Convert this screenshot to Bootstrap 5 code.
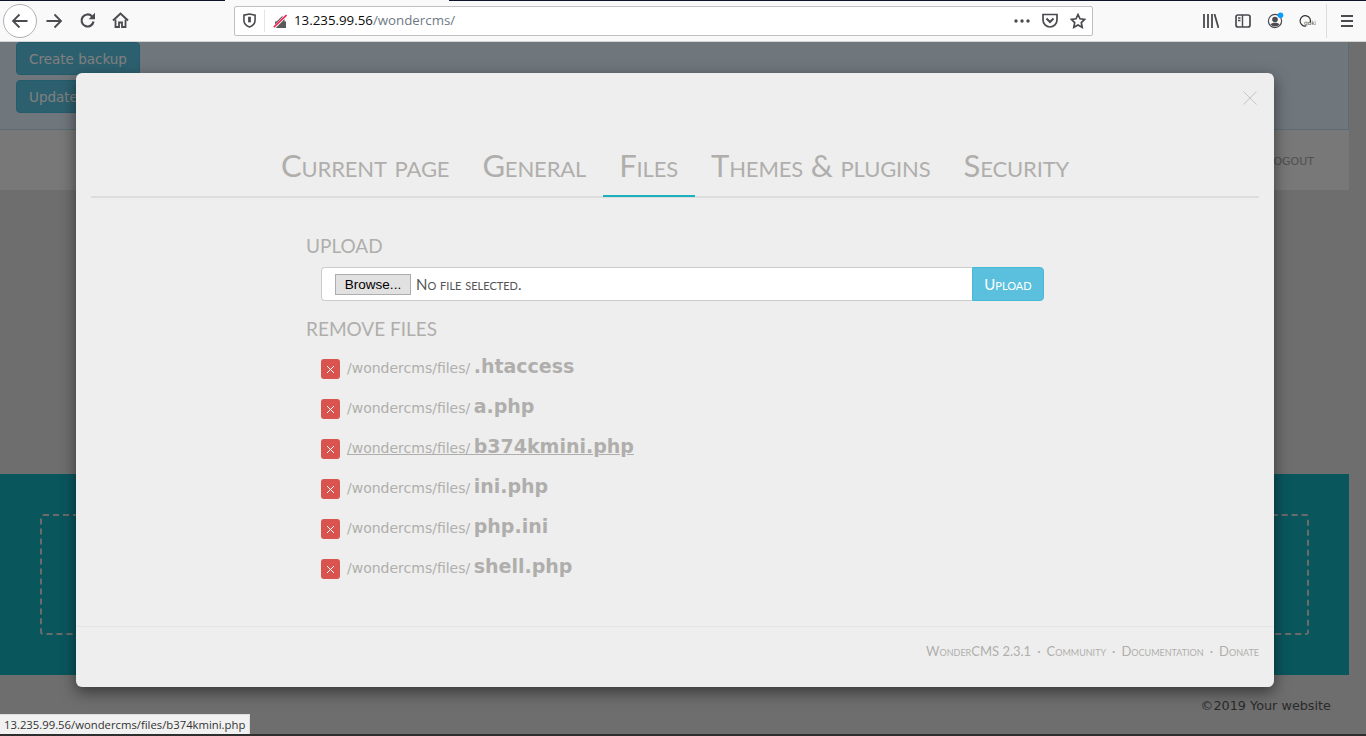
<!DOCTYPE html>
<html lang="en">
  <head>
    <meta charset="UTF-8" />
    <meta name="viewport" content="width=device-width, initial-scale=1" />
    <title>WonderCMS - Files</title>
    <link
      href="https://cdn.jsdelivr.net/npm/bootstrap@5.3.0/dist/css/bootstrap.min.css"
      rel="stylesheet"
    />
    <style>
      html,
      body {
        height: 736px;
        overflow: hidden;
      }
      body {
        background: #ddd;
        font-family: "DejaVu Sans", sans-serif;
        color: #222;
      }
      /* browser chrome */
      .browser-bar {
        height: 42px;
        background: #f9f9fa;
        border-bottom: 1px solid #d4d4d4;
        padding-left: 3px;
        color: #4a4a4f;
        position: relative;
      }
      .browser-bar svg {
        display: block;
        flex: none;
      }
      .back-circle {
        width: 34px;
        height: 34px;
        border: 1px solid #b1b1b3;
        border-radius: 50%;
        background: #fff;
      }
      .url-box {
        margin-left: 105px;
        width: 859px;
        height: 30px;
        background: #fff;
        border: 1px solid #c0c0c2;
        border-radius: 2px;
        font-family: "Open Sans", sans-serif;
        font-size: 13.3px;
        color: #0c0c0d;
      }
      .url-path {
        color: #6f7a86;
      }
      .url-sep {
        width: 1px;
        height: 22px;
        margin: 0 8px;
        background: #e4e4e6;
      }
      .url-actions {
        gap: 12px;
        margin-right: 6px;
      }
      .bar-sep {
        width: 1px;
        height: 34px;
        background: #dcdcde;
      }
      .top-line {
        position: absolute;
        top: 0;
        height: 1px;
        background: #101428;
      }
      /* page behind the modal */
      .page-area {
        position: relative;
        height: 694px;
        overflow: hidden;
      }
      .settings-strip {
        height: 88px;
        margin-right: 17px;
        background: #deecf8;
        border-right: 1px solid #b5dbe4;
        border-bottom: 1px solid #b5dbe4;
        padding-left: 16px;
      }
      .cms-btn {
        background: #5bc0de;
        border: 1px solid #46b8da;
        color: #fff;
        font-size: 13.5px;
        padding: 4px 12px;
        border-radius: 4px;
        height: 33px;
        width: 124px;
        line-height: 20px;
        white-space: nowrap;
      }
      .cms-btn + .cms-btn {
        margin-top: 5px;
      }
      .site-nav {
        height: 60px;
        margin-right: 17px;
        background: #f0f0f0;
        font-size: 11px;
        padding: 5px 35px 0 0;
        color: #a0a0a0;
      }
      .site-body {
        height: 284px;
      }
      .teal-band {
        height: 201px;
        margin-right: 17px;
        background: #15adba;
        padding: 40px;
      }
      .dash-box {
        height: 121px;
        border: 2px dashed #d6d6d6;
        border-radius: 3px;
      }
      .site-foot {
        padding: 21px 35px 0 0;
        font-size: 12.8px;
        color: #555;
        text-align: right;
      }
      /* overlay and modal */
      .dim-layer {
        position: absolute;
        inset: 0;
        background: rgba(0, 0, 0, 0.5);
        padding: 31px 92px 0 76px;
      }
      .cms-modal {
        height: 614px;
        background: #eee;
        border: 0;
        border-radius: 6px;
        box-shadow: 0 5px 15px rgba(0, 0, 0, 0.5);
        color: #b0aeac;
        font-family: Lato, sans-serif;
        position: relative;
      }
      .close-x {
        position: absolute;
        top: 18px;
        right: 17px;
        display: block;
      }
      .cms-tabs {
        margin: 0 15px;
        padding-top: 66px;
        height: 125px;
        border-bottom: 2px solid #ddd;
        font-variant: small-caps;
        font-size: 31px;
        letter-spacing: -0.15px;
        line-height: 40px;
      }
      .tab-item {
        padding: 6px 16.5px 12px;
        margin-bottom: -2px;
        height: 58px;
        color: #b0aeac;
      }
      .tab-on {
        border-bottom: 2px solid #1ab0bd;
      }
      .files-pane {
        padding: 35px 0 0 230px;
        width: 968px;
      }
      .pane-title {
        font-size: 19px;
        line-height: 26px;
        margin: 0;
        color: #b0aeac;
        font-weight: 400;
      }
      .file-group {
        margin: 8px 0 15px 15px;
        height: 34px;
      }
      .file-box {
        width: 651px;
        height: 34px;
        background: #fff;
        border: 1px solid #ccc;
        border-radius: 4px 0 0 4px;
        border-right: 0;
        padding-left: 13px;
        font-variant: small-caps;
        font-size: 15px;
        color: #555;
        gap: 5px;
      }
      .browse-btn {
        width: 76px;
        height: 21px;
        background: #e1e1e1;
        border: 1px solid #adadad;
        font-family: "Liberation Sans", sans-serif;
        font-variant: normal;
        font-size: 13.5px;
        line-height: 19px;
        color: #000;
        padding: 0;
        border-radius: 0;
      }
      .upload-btn {
        width: 72px;
        height: 34px;
        background: #5bc0de;
        border: 1px solid #46b8da;
        border-radius: 0 4px 4px 0;
        color: #fff;
        font-family: Lato, sans-serif;
        font-variant: small-caps;
        font-size: 15px;
        padding: 0;
      }
      .file-list {
        margin: 4px 0 0 15px;
      }
      .file-row {
        height: 40px;
        gap: 7px;
        font-family: "DejaVu Sans", sans-serif;
        font-size: 14px;
        color: #b0aeac;
      }
      .file-row b {
        font-size: 19px;
        margin-left: -1px;
      }
      .file-row a {
        color: inherit;
        text-decoration: none;
      }
      .file-row a.hover-link {
        text-decoration: underline;
      }
      .del-btn {
        width: 19px;
        height: 20px;
        background: #d9534f;
        border-radius: 3px;
        margin-top: 6px;
      }
      .modal-foot {
        position: absolute;
        left: 0;
        right: 0;
        bottom: 0;
        height: 61px;
        border-top: 1px solid #e5e5e5;
        padding: 0 15px 10px 0;
        font-variant: small-caps;
        font-size: 13px;
        gap: 6px;
      }
      .foot-version {
        margin-right: -1px;
        letter-spacing: -0.2px;
      }
      .status-tip {
        position: absolute;
        left: 0;
        bottom: 2px;
        height: 20px;
        padding: 0 4px;
        background: #f1f1f1;
        border: 1px solid #ddd;
        border-left: 0;
        border-bottom: 0;
        font-family: "Open Sans", sans-serif;
        font-size: 11.3px;
        line-height: 19px;
        color: #333;
      }
      .bottom-line {
        position: absolute;
        left: 0;
        right: 0;
        bottom: 0;
        height: 2px;
        background: #2e2e2e;
      }
    </style>
  </head>
  <body>
    <!-- Browser toolbar -->
    <div class="browser-bar d-flex align-items-center">
      <span class="top-line" style="left: 0; width: 225px"></span>
      <span class="top-line" style="left: 449px; width: 917px"></span>
      <div class="back-circle d-flex align-items-center justify-content-center">
        <svg width="18" height="18" viewBox="0 0 18 18" fill="none" stroke="currentColor" stroke-width="1.8">
          <path d="M16.5 9H2M8.5 2.5 2 9l6.5 6.5" />
        </svg>
      </div>
      <svg class="ms-2" width="18" height="18" viewBox="0 0 18 18" fill="none" stroke="currentColor" stroke-width="1.8">
        <path d="M1.5 9H16M9.5 2.5 16 9l-6.5 6.5" />
      </svg>
      <svg class="ms-3" width="17" height="17" viewBox="0 0 17 17" fill="none" stroke="currentColor" stroke-width="2.2">
        <path d="M14.5 9.5a6 6 0 1 1-1.6-5.2L15 6.2" />
        <path d="M16 0.8v6.4H9.6" fill="currentColor" stroke="none" />
      </svg>
      <svg class="ms-3" width="17" height="17" viewBox="0 0 17 17" fill="none" stroke="currentColor" stroke-width="2">
        <path d="M1 8.5 8.5 1.5l7.5 7" />
        <path d="M3.5 7.5v7.5h3.5v-4.5h3V15h3.5V7.5" stroke-width="1.8" />
      </svg>
      <div class="url-box d-flex align-items-center">
        <svg style="margin-left: 8px" width="13" height="15" viewBox="0 0 14 16" fill="none" stroke="#4a4a4f" stroke-width="1.7">
          <path d="M1 2.2 7 1l6 1.2V8c0 3.4-2.8 5.8-6 7C3.8 13.8 1 11.4 1 8z" />
          <path d="M7 4v6" stroke-width="3" />
        </svg>
        <span class="url-sep"></span>
        <svg width="14" height="14" viewBox="0 0 14 14">
          <path d="M2 14V7.5h1.5L9 2.2c1.8.4 2.6 1.6 2.6 3.3v2H13V14z" fill="#5a5a5e" />
          <path d="M1 13.5 13.5 1.2" stroke="#fff" stroke-width="3" />
          <path d="M0.8 13.2 13.5 1" stroke="#f0264f" stroke-width="1.6" />
        </svg>
        <span style="margin-left: 7px"><span>13.235.99.56</span><span class="url-path">/wondercms/</span></span>
        <span class="url-actions d-flex align-items-center ms-auto">
          <svg width="16" height="4" viewBox="0 0 16 4" fill="#4a4a4f">
            <circle cx="2" cy="2" r="1.7" /><circle cx="8" cy="2" r="1.7" /><circle cx="14" cy="2" r="1.7" />
          </svg>
          <svg width="16" height="15" viewBox="0 0 16 15" fill="none" stroke="#4a4a4f" stroke-width="1.7">
            <path d="M1 1.5h14V7a7 7 0 0 1-14 0z" />
            <path d="M4.5 5.5 8 9l3.5-3.5" stroke-width="2" />
          </svg>
          <svg width="16" height="16" viewBox="0 0 16 16" fill="none" stroke="#4a4a4f" stroke-width="1.7">
            <path d="m8 1.5 2 4.3 4.7.6-3.4 3.2.9 4.7L8 12l-4.2 2.3.9-4.7L1.3 6.4 6 5.8z" />
          </svg>
        </span>
      </div>
      <div class="d-flex align-items-center" style="margin-left: 110px">
        <svg width="16" height="14" viewBox="0 0 16 14" fill="none" stroke="#4a4a4f" stroke-width="1.8">
          <path d="M1 0v14M5 0v14M9 0v14M11.5 0l4 14" />
        </svg>
        <svg style="margin-left: 16px" width="16" height="14" viewBox="0 0 16 14" fill="none" stroke="#4a4a4f" stroke-width="1.7">
          <rect x="1" y="1" width="14" height="12" rx="2" />
          <path d="M7.5 1v12M3 4h2.5M3 6.5h2.5" stroke-width="1.4" />
        </svg>
        <svg style="margin-left: 16px" width="17" height="17" viewBox="0 0 17 17">
          <circle cx="8" cy="9" r="6.6" fill="none" stroke="#4a4a4f" stroke-width="1.2" />
          <circle cx="8" cy="7.5" r="2.8" fill="#4a4a4f" />
          <path d="M3.5 12.5c1-2.4 8-2.4 9 0a6 6 0 0 1-9 0" fill="#4a4a4f" />
          <circle cx="13.5" cy="3.2" r="2.8" fill="#0a9dff" />
        </svg>
        <svg style="margin-left: 15px" width="17" height="14" viewBox="0 0 17 14">
          <path d="M7 12A5.2 5.2 0 1 1 11 9" fill="none" stroke="#333" stroke-width="1.2" />
          <text x="5" y="11" font-family="DejaVu Sans" font-size="6" fill="#555">goki</text>
        </svg>
        <span class="bar-sep" style="margin-left: 10px"></span>
        <svg style="margin-left: 13px" width="14" height="12" viewBox="0 0 14 12" stroke="#4a4a4f" stroke-width="1.8">
          <path d="M1 1h12M1 6h12M1 11h12" />
        </svg>
      </div>
    </div>

    <!-- Page with modal over it -->
    <div class="page-area">
      <div class="settings-strip">
        <button class="btn cms-btn d-block text-start">Create backup</button>
        <button class="btn cms-btn d-block text-start">Update</button>
      </div>
      <div class="site-nav d-flex align-items-center justify-content-end">LOGOUT</div>
      <div class="site-body"></div>
      <div class="teal-band"><div class="dash-box"></div></div>
      <div class="site-foot">©2019 Your website</div>

      <div class="dim-layer">
        <div class="cms-modal">
          <svg class="close-x" width="14" height="14" viewBox="0 0 14 14" stroke="#c6c6c6" stroke-width="1">
            <path d="M0.5 0.5l13 13M13.5 0.5l-13 13" />
          </svg>
          <div class="cms-tabs d-flex justify-content-center">
            <div class="tab-item">Current page</div>
            <div class="tab-item">General</div>
            <div class="tab-item tab-on">Files</div>
            <div class="tab-item">Themes &amp; plugins</div>
            <div class="tab-item">Security</div>
          </div>
          <div class="files-pane">
            <h3 class="pane-title">UPLOAD</h3>
            <div class="file-group d-flex">
              <div class="file-box d-flex align-items-center">
                <button class="btn browse-btn">Browse...</button>
                <span>No file selected.</span>
              </div>
              <button class="btn upload-btn">Upload</button>
            </div>
            <h3 class="pane-title">REMOVE FILES</h3>
            <div class="file-list" id="fileList"></div>
          </div>
          <div class="modal-foot d-flex align-items-center justify-content-end">
            <span>WonderCMS 2.3.1</span><span>·</span><span>Community</span><span>·</span><span>Documentation</span><span>·</span><span>Donate</span>
          </div>
        </div>
      </div>
    </div>

    <div class="bottom-line"></div>
    <div class="status-tip">13.235.99.56/wondercms/files/b374kmini.php</div>

    <script>
      const files = [".htaccess", "a.php", "b374kmini.php", "ini.php", "php.ini", "shell.php"];
      const hovered = "b374kmini.php";
      document.getElementById("fileList").innerHTML = files
        .map(
          (name) => `
            <div class="file-row d-flex align-items-center">
              <span class="del-btn d-flex align-items-center justify-content-center">
                <svg width="9" height="9" viewBox="0 0 9 9" stroke="#fff" stroke-width="1"><path d="M1 1l7 7M8 1 1 8" /></svg>
              </span>
              <a href="#" class="${name === hovered ? "hover-link" : ""}">/wondercms/files/ <b>${name}</b></a>
            </div>`
        )
        .join("");
    </script>
  </body>
</html>
